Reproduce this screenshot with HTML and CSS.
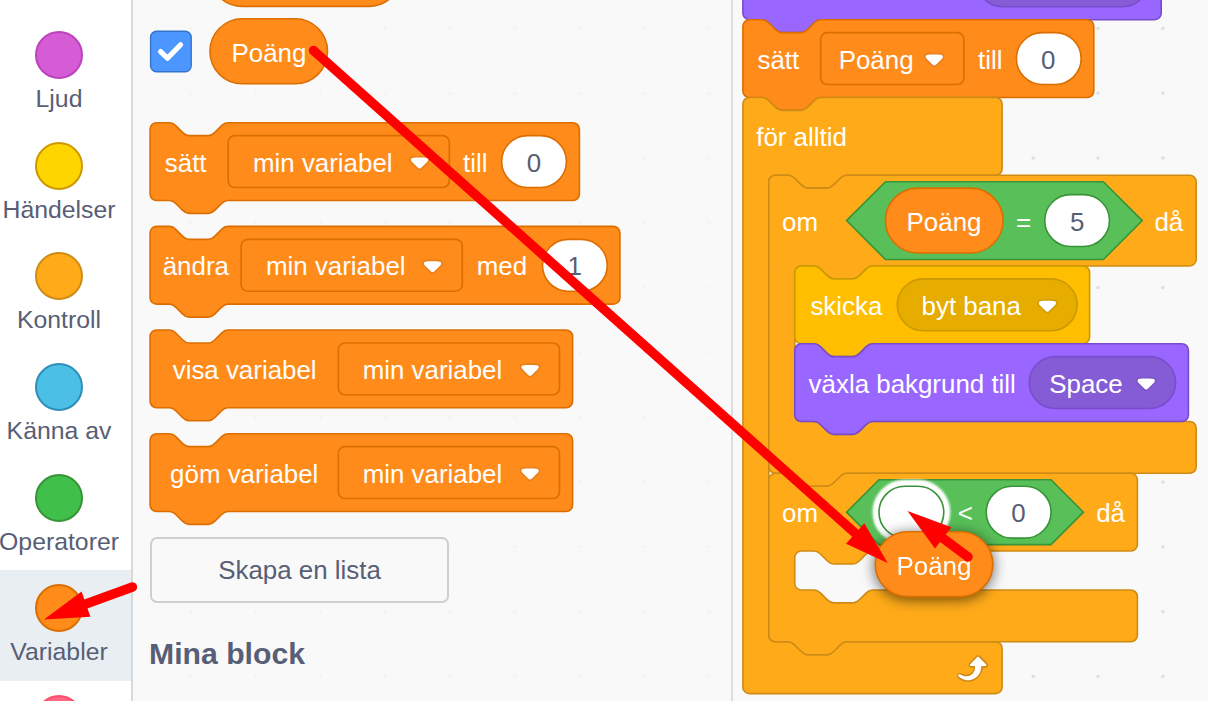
FILE: index.html
```html
<!DOCTYPE html>
<html lang="sv">
<head>
<meta charset="utf-8">
<title>Scratch – Variabler</title>
<link rel="stylesheet" href="styles.css">
</head>
<body>
<svg width="0" height="0" class="defs">
  <defs>
    <g id="caret" transform="translate(-.3 -.2)">
      <path fill="#231f20" fill-opacity=".1" d="M12.71,2.44A2.41,2.41,0,0,1,12,4.16L8.08,8.08a2.45,2.45,0,0,1-3.45,0L0.72,4.16A2.42,2.42,0,0,1,0,2.44,2.48,2.48,0,0,1,.71.71C1,0.47,1.43,0,6.36,0S11.75,0.46,12,.71A2.44,2.44,0,0,1,12.71,2.44Z"/>
      <path fill="#fff" stroke="none" d="M6.36,7.79a1.43,1.43,0,0,1-1-.42L1.42,3.45a1.44,1.44,0,0,1,0-2c0.56-.56,9.31-0.56,9.87,0a1.44,1.44,0,0,1,0,2L7.37,7.37A1.43,1.43,0,0,1,6.36,7.79Z"/>
    </g>
    <pattern id="dots" x="1065.6" y="-4" width="64.8" height="64.8" patternUnits="userSpaceOnUse">
      <circle cx="32.4" cy="32.4" r="1.7" fill="#ddd"/>
    </pattern>
    <pattern id="dots-faint" x="158.4" y="-4" width="64.8" height="64.8" patternUnits="userSpaceOnUse">
      <circle cx="32.4" cy="32.4" r="1.6" fill="#f2f2f2"/>
    </pattern>
  </defs>
</svg>
<div class="app">
  <nav class="categories">
    <div class="category"><span class="dot sound"></span><span class="label">Ljud</span></div>
    <div class="category"><span class="dot events"></span><span class="label">Händelser</span></div>
    <div class="category"><span class="dot control"></span><span class="label">Kontroll</span></div>
    <div class="category"><span class="dot sensing"></span><span class="label">Känna av</span></div>
    <div class="category"><span class="dot operators"></span><span class="label">Operatorer</span></div>
    <div class="category selected"><span class="dot variables"></span><span class="label">Variabler</span></div>
    <div class="category"><span class="dot myblocks"></span></div>
  </nav>

  <section class="palette">
    <svg class="grid" viewBox="133 0 598 701"><rect x="133" width="598" height="701" fill="url(#dots-faint)"/></svg>
    <div class="palette-list">
      <svg class="reporters" width="300" height="120" viewBox="148 0 300 120">
        <rect class="data line" x="209.8" y="-58.4" width="191.5" height="64.8" rx="32.4"/>
        <rect x="150.6" y="31.2" width="40.6" height="40.6" rx="6" fill="#4c97ff" stroke="#3373cc" stroke-width="1.4"/>
        <path d="M160.6 51.6l6.8 6.6L180.6 44.8" fill="none" stroke="#fff" stroke-width="5.2" stroke-linecap="round" stroke-linejoin="round"/>
        <rect class="data line" x="210" y="18.8" width="117.5" height="65" rx="32.4"/>
        <text x="231.5" y="62">Poäng</text>
      </svg>

      <svg class="block" width="480" height="104">
        <g transform="translate(2.1 2.7)">
          <g class="data" transform="scale(1.62)">
            <path d="M0,4A4,4 0 0,1 4,0H12c2,0 3,1 4,2l4,4c1,1 2,2 4,2h12c2,0 3,-1 4,-2l4,-4c1,-1 2,-2 4,-2H261a4,4 0 0,1 4,4v40a4,4 0 0,1 -4,4H48c-2,0 -3,1 -4,2l-4,4c-1,1 -2,2 -4,2h-12c-2,0 -3,-1 -4,-2l-4,-4c-1,-1 -2,-2 -4,-2H4a4,4 0 0,1 -4,-4z"/>
            <rect x="48.2" y="8" width="136.5" height="32" rx="4"/>
            <rect class="slot" x="217" y="8" width="40" height="32" rx="16"/>
            <use href="#caret" x="160.3" y="20.7"/>
          </g>
          <text x="14.7" y="49">sätt</text><text x="102.9" y="49">min variabel</text><text x="313" y="49">till</text>
          <text class="value" x="383.8" y="49">0</text>
        </g>
      </svg>
      <svg class="block" width="480" height="104">
        <g transform="translate(2.1 2.4)">
          <g class="data" transform="scale(1.62)">
            <path d="M0,4A4,4 0 0,1 4,0H12c2,0 3,1 4,2l4,4c1,1 2,2 4,2h12c2,0 3,-1 4,-2l4,-4c1,-1 2,-2 4,-2H286a4,4 0 0,1 4,4v40a4,4 0 0,1 -4,4H48c-2,0 -3,1 -4,2l-4,4c-1,1 -2,2 -4,2h-12c-2,0 -3,-1 -4,-2l-4,-4c-1,-1 -2,-2 -4,-2H4a4,4 0 0,1 -4,-4z"/>
            <rect x="56.2" y="8" width="136.5" height="32" rx="4"/>
            <rect class="slot" x="242.2" y="8" width="40" height="32" rx="16"/>
            <use href="#caret" x="168.3" y="20.7"/>
          </g>
          <text x="12.6" y="48.6">ändra</text><text x="115.9" y="48.6">min variabel</text><text x="326.7" y="48.6">med</text>
          <text class="value" x="424.5" y="48.6">1</text>
        </g>
      </svg>
      <svg class="block" width="480" height="104">
        <g transform="translate(2.1 2)">
          <g class="data" transform="scale(1.62)">
            <path d="M0,4A4,4 0 0,1 4,0H12c2,0 3,1 4,2l4,4c1,1 2,2 4,2h12c2,0 3,-1 4,-2l4,-4c1,-1 2,-2 4,-2H256.8a4,4 0 0,1 4,4v40a4,4 0 0,1 -4,4H48c-2,0 -3,1 -4,2l-4,4c-1,1 -2,2 -4,2h-12c-2,0 -3,-1 -4,-2l-4,-4c-1,-1 -2,-2 -4,-2H4a4,4 0 0,1 -4,-4z"/>
            <rect x="116.2" y="8" width="136.5" height="32" rx="4"/>
            <use href="#caret" x="228.5" y="20.7"/>
          </g>
          <text x="22.6" y="49">visa variabel</text><text x="212.6" y="49">min variabel</text>
        </g>
      </svg>
      <svg class="block" width="480" height="104">
        <g transform="translate(2.1 1.7)">
          <g class="data" transform="scale(1.62)">
            <path d="M0,4A4,4 0 0,1 4,0H12c2,0 3,1 4,2l4,4c1,1 2,2 4,2h12c2,0 3,-1 4,-2l4,-4c1,-1 2,-2 4,-2H256.8a4,4 0 0,1 4,4v40a4,4 0 0,1 -4,4H48c-2,0 -3,1 -4,2l-4,4c-1,1 -2,2 -4,2h-12c-2,0 -3,-1 -4,-2l-4,-4c-1,-1 -2,-2 -4,-2H4a4,4 0 0,1 -4,-4z"/>
            <rect x="116.2" y="8" width="136.5" height="32" rx="4"/>
            <use href="#caret" x="228.5" y="20.7"/>
          </g>
          <text x="20" y="49">göm variabel</text><text x="212.6" y="49">min variabel</text>
        </g>
      </svg>
      <button class="make-list">Skapa en lista</button>
      <h2 class="heading">Mina block</h2>
    </div>
  </section>

  <svg class="workspace" width="475" height="701" viewBox="733 0 475 701">
    <rect x="733" width="475" height="701" fill="#f9f9f9"/>
    <rect x="733" width="475" height="701" fill="url(#dots)"/>

    <g transform="translate(742.9 19.7) scale(1.62)">
      <!-- looks: switch backdrop, bottom edge only -->
      <g class="looks">
        <path d="M0,-44A4,4 0 0,1 4,-48H254.2a4,4 0 0,1 4,4v40a4,4 0 0,1 -4,4H48c-2,0 -3,1 -4,2l-4,4c-1,1 -2,2 -4,2h-12c-2,0 -3,-1 -4,-2l-4,-4c-1,-1 -2,-2 -4,-2H4a4,4 0 0,1 -4,-4z"/>
        <rect class="looks-field" x="144.3" y="-40" width="106" height="32" rx="16"/>
      </g>
      <!-- set variable -->
      <g class="data">
        <path d="M0,4A4,4 0 0,1 4,0H12c2,0 3,1 4,2l4,4c1,1 2,2 4,2h12c2,0 3,-1 4,-2l4,-4c1,-1 2,-2 4,-2H212.6a4,4 0 0,1 4,4v40a4,4 0 0,1 -4,4H48c-2,0 -3,1 -4,2l-4,4c-1,1 -2,2 -4,2h-12c-2,0 -3,-1 -4,-2l-4,-4c-1,-1 -2,-2 -4,-2H4a4,4 0 0,1 -4,-4z"/>
        <rect x="48" y="8" width="88.4" height="32" rx="4"/>
        <rect class="slot" x="168.8" y="8" width="40" height="32" rx="16"/>
        <use href="#caret" x="112.1" y="20.7"/>
      </g>
      <!-- forever -->
      <path class="ctrl" d="M0,52A4,4 0 0,1 4,48H12c2,0 3,1 4,2l4,4c1,1 2,2 4,2h12c2,0 3,-1 4,-2l4,-4c1,-1 2,-2 4,-2H156a4,4 0 0,1 4,4v40a4,4 0 0,1 -4,4H64c-2,0 -3,1 -4,2l-4,4c-1,1 -2,2 -4,2h-12c-2,0 -3,-1 -4,-2l-4,-4c-1,-1 -2,-2 -4,-2h-8a4,4 0 0,0 -4,4V380a4,4 0 0,0 4,4h8c2,0 3,1 4,2l4,4c1,1 2,2 4,2h12c2,0 3,-1 4,-2l4,-4c1,-1 2,-2 4,-2H156a4,4 0 0,1 4,4v24a4,4 0 0,1 -4,4H4a4,4 0 0,1 -4,-4z"/>
      <g transform="translate(128 388)">
        <path fill="#cf8b17" d="M23.3,11c-0.3,0.6-0.9,1-1.5,1h-1.6c-0.1,1.3-0.5,2.5-1.1,3.6c-0.9,1.7-2.3,3.2-4.1,4.1c-1.7,0.9-3.6,1.2-5.5,0.9c-1.8-0.3-3.5-1.1-4.9-2.3c-0.7-0.7-0.7-1.9,0-2.6c0.6-0.6,1.6-0.7,2.3-0.2H7c0.9,0.6,1.9,0.9,2.9,0.9s1.9-0.3,2.7-0.9c1.1-0.8,1.8-2.1,1.8-3.5h-1.5c-0.9,0-1.7-0.7-1.7-1.7c0-0.4,0.2-0.9,0.5-1.2l4.4-4.4c0.7-0.6,1.7-0.6,2.4,0L23,9.2C23.5,9.7,23.6,10.4,23.3,11z"/>
        <path fill="#fff" d="M21.8,11h-2.6c0,1.5-0.3,2.9-1,4.2c-0.8,1.6-2.1,2.8-3.7,3.6c-1.5,0.8-3.3,1.1-4.9,0.8c-1.6-0.2-3.2-1-4.4-2.1c-0.4-0.3-0.4-0.9-0.1-1.2c0.3-0.4,0.9-0.4,1.2-0.1l0,0c1,0.7,2.2,1.1,3.4,1.1s2.3-0.3,3.3-1c0.9-0.6,1.6-1.5,2-2.6c0.3-0.9,0.4-1.8,0.2-2.8h-2.4c-0.4,0-0.7-0.3-0.7-0.7c0-0.2,0.1-0.3,0.2-0.4l4.4-4.4c0.3-0.3,0.7-0.3,0.9,0L22,9.8c0.3,0.3,0.4,0.6,0.3,0.9S22,11,21.8,11z"/>
      </g>
      <!-- if Poäng = 5 -->
      <g transform="translate(16 96)">
        <path class="ctrl" d="M0,4A4,4 0 0,1 4,0H12c2,0 3,1 4,2l4,4c1,1 2,2 4,2h12c2,0 3,-1 4,-2l4,-4c1,-1 2,-2 4,-2H259.8a4,4 0 0,1 4,4v48a4,4 0 0,1 -4,4H64c-2,0 -3,1 -4,2l-4,4c-1,1 -2,2 -4,2h-12c-2,0 -3,-1 -4,-2l-4,-4c-1,-1 -2,-2 -4,-2h-8a4,4 0 0,0 -4,4V148a4,4 0 0,0 4,4h8c2,0 3,1 4,2l4,4c1,1 2,2 4,2h12c2,0 3,-1 4,-2l4,-4c1,-1 2,-2 4,-2H259.8a4,4 0 0,1 4,4v24a4,4 0 0,1 -4,4H48c-2,0 -3,1 -4,2l-4,4c-1,1 -2,2 -4,2h-12c-2,0 -3,-1 -4,-2l-4,-4c-1,-1 -2,-2 -4,-2H4a4,4 0 0,1 -4,-4z"/>
        <g class="op">
          <path d="M72,4H206.5l24,24l-24,24H72l-24,-24z"/>
          <rect class="slot" x="170.3" y="12" width="40" height="32" rx="16"/>
        </g>
        <rect class="data" x="72" y="8" width="72.6" height="40" rx="20"/>
        <!-- broadcast -->
        <g class="event" transform="translate(16 56)">
          <path d="M0,4A4,4 0 0,1 4,0H12c2,0 3,1 4,2l4,4c1,1 2,2 4,2h12c2,0 3,-1 4,-2l4,-4c1,-1 2,-2 4,-2H178a4,4 0 0,1 4,4v40a4,4 0 0,1 -4,4H48c-2,0 -3,1 -4,2l-4,4c-1,1 -2,2 -4,2h-12c-2,0 -3,-1 -4,-2l-4,-4c-1,-1 -2,-2 -4,-2H4a4,4 0 0,1 -4,-4z"/>
          <rect class="event-field" x="63.3" y="8" width="111" height="32" rx="16"/>
          <use href="#caret" x="149.9" y="20.7"/>
        </g>
        <!-- switch backdrop -->
        <g class="looks" transform="translate(16 104)">
          <path d="M0,4A4,4 0 0,1 4,0H12c2,0 3,1 4,2l4,4c1,1 2,2 4,2h12c2,0 3,-1 4,-2l4,-4c1,-1 2,-2 4,-2H239a4,4 0 0,1 4,4v40a4,4 0 0,1 -4,4H48c-2,0 -3,1 -4,2l-4,4c-1,1 -2,2 -4,2h-12c-2,0 -3,-1 -4,-2l-4,-4c-1,-1 -2,-2 -4,-2H4a4,4 0 0,1 -4,-4z"/>
          <rect class="looks-field" x="144.8" y="8" width="90.3" height="32" rx="16"/>
          <use href="#caret" x="210.9" y="20.7"/>
        </g>
      </g>
      <!-- if ( ) < 0 -->
      <g transform="translate(16 280)">
        <path class="ctrl" d="M0,4A4,4 0 0,1 4,0H12c2,0 3,1 4,2l4,4c1,1 2,2 4,2h12c2,0 3,-1 4,-2l4,-4c1,-1 2,-2 4,-2H223.5a4,4 0 0,1 4,4v40a4,4 0 0,1 -4,4H64c-2,0 -3,1 -4,2l-4,4c-1,1 -2,2 -4,2h-12c-2,0 -3,-1 -4,-2l-4,-4c-1,-1 -2,-2 -4,-2h-8a4,4 0 0,0 -4,4V68a4,4 0 0,0 4,4h8c2,0 3,1 4,2l4,4c1,1 2,2 4,2h12c2,0 3,-1 4,-2l4,-4c1,-1 2,-2 4,-2H223.5a4,4 0 0,1 4,4v24a4,4 0 0,1 -4,4H48c-2,0 -3,1 -4,2l-4,4c-1,1 -2,2 -4,2h-12c-2,0 -3,-1 -4,-2l-4,-4c-1,-1 -2,-2 -4,-2H4a4,4 0 0,1 -4,-4z"/>
        <g class="op">
          <path d="M68,4H174.2l20,20l-20,20H68l-20,-20z"/>
          <rect class="slot" x="134.2" y="8" width="40" height="32" rx="16"/>
          <rect class="glow" x="68" y="8" width="40" height="32" rx="16"/>
          <rect class="slot" x="68" y="8" width="40" height="32" rx="16"/>
        </g>
      </g>
    </g>

    <g>
      <text x="757.5" y="69">sätt</text><text x="838.7" y="69">Poäng</text><text x="978" y="69">till</text><text class="value" x="1048.2" y="69">0</text>
      <text x="756.2" y="145.8">för alltid</text>
      <text x="782" y="231">om</text><text x="906.6" y="231">Poäng</text><text x="1016" y="231">=</text><text class="value" x="1077.2" y="231">5</text><text x="1154.4" y="231">då</text>
      <text x="810.4" y="315">skicka</text><text x="921.6" y="315">byt bana</text>
      <text x="808.6" y="393">växla bakgrund till</text><text x="1049.3" y="393">Space</text>
      <text x="782" y="522">om</text><text x="957.8" y="522">&lt;</text><text class="value" x="1018.4" y="522">0</text><text x="1096.2" y="522">då</text>
    </g>

    <g class="dragged">
      <rect class="data line" x="875.3" y="531.8" width="117.5" height="64.8" rx="32.4"/>
      <text x="896.5" y="574.6">Poäng</text>
    </g>
  </svg>
</div>

<svg class="annotations" width="1208" height="701">
  <g stroke="#f00" stroke-width="9.4" stroke-linecap="round" fill="#f00">
    <path d="M313.5 50.5L855 533"/>
    <path d="M968 557L940 536"/>
    <path d="M132.5 587L83 605"/>
    <g stroke="none">
      <path d="M887.7 562.9L864.3 523.3L846 543.7z"/>
      <path d="M907.5 511L951.4 527.3L935 548.6z"/>
      <path d="M44 619.6L81.6 591.5L90.4 616.8z"/>
    </g>
  </g>
</svg>
</body>
</html>
```
FILE: styles.css
```css
* { box-sizing: border-box; }
body {
  margin: 0;
  width: 1208px;
  height: 701px;
  overflow: hidden;
  position: relative;
  font-family: "Liberation Sans", Arial, sans-serif;
  color: #575e75;
  background: #fff;
}
.defs { position: absolute; }
.app { display: flex; width: 1208px; height: 701px; overflow: hidden; }

.categories {
  flex: none;
  width: 131px;
  height: 701px;
  padding-top: 16.6px;
  background: #fff;
  overflow: hidden;
}
.category {
  display: flex;
  flex-direction: column;
  align-items: center;
  width: 131px;
  height: 110.7px;
  padding: 14.4px 13px 0 0;
}
.selected { background: #e9eef2; }
.dot {
  flex: none;
  width: 48px;
  height: 48px;
  border-radius: 50%;
  border: 2px solid;
}
.label { font-size: 24.8px; line-height: 30px; margin-top: 5px; white-space: nowrap; }
.sound { background: #d65cd6; border-color: #bd42bd; }
.events { background: #ffd500; border-color: #cc9900; }
.control { background: #ffab19; border-color: #cf8b17; }
.sensing { background: #4cbfe6; border-color: #2e8eb8; }
.operators { background: #40bf4a; border-color: #389438; }
.variables { background: #ff8c1a; border-color: #db6e00; }
.myblocks { background: #ff6680; border-color: #ff4d6a; }

.palette {
  flex: none;
  position: relative;
  width: 602px;
  height: 701px;
  background: #f9f9f9;
  border-left: 2px solid #d9d9d9;
  border-right: 2px solid #ddd;
}
.grid { position: absolute; left: 0; top: 0; width: 598px; height: 701px; }
.palette-list { position: relative; display: flex; flex-direction: column; align-items: flex-start; padding-left: 15px; }
.reporters, .block { display: block; flex: none; }
.make-list {
  width: 299px;
  height: 66px;
  margin: 1px 0 0 2px;
  padding: 0;
  border: 2px solid #cfcfcf;
  border-radius: 7px;
  background: #f9f9f9;
  color: #575e75;
  font: 25.9px "Liberation Sans", Arial, sans-serif;
}
.heading { margin: 33px 0 0 1px; font-size: 30.2px; line-height: 36px; font-weight: bold; }

.workspace { flex: none; display: block; }

text { font-family: "Liberation Sans", Arial, sans-serif; font-size: 25.9px; fill: #fff; }
.value { fill: #575e75; text-anchor: middle; }
.data { fill: #ff8c1a; stroke: #db6e00; }
.ctrl { fill: #ffab19; stroke: #cf8b17; }
.looks { fill: #9966ff; stroke: #774dcb; }
.looks-field { fill: #855cd6; }
.event { fill: #ffbf00; stroke: #cc9900; }
.event-field { fill: #e6ac00; }
.op { fill: #59c059; stroke: #389438; }
.slot { fill: #fff; }
.line { stroke-width: 1.6; }
use { stroke: none; }
.dragged text { stroke: none; }
.glow { fill: #fff; stroke: #fff; stroke-width: 8; filter: blur(0.8px); }
.dragged { filter: drop-shadow(0 2px 7px rgba(0, 0, 0, 0.6)); }

.annotations { position: absolute; left: 0; top: 0; pointer-events: none; }
```
